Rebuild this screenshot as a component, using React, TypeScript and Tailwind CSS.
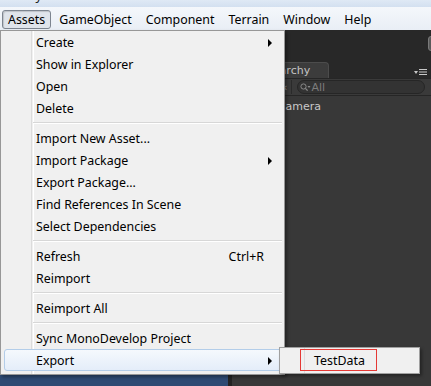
import React from 'react';

type Item = { label: string; arrow?: boolean; shortcut?: string; active?: boolean } | 'sep';

const MENU_BAR = ['GameObject', 'Component', 'Terrain', 'Window', 'Help'];

const ITEMS: Item[] = [
    { label: 'Create', arrow: true },
    { label: 'Show in Explorer' },
    { label: 'Open' },
    { label: 'Delete' },
    'sep',
    { label: 'Import New Asset...' },
    { label: 'Import Package', arrow: true },
    { label: 'Export Package...' },
    { label: 'Find References In Scene' },
    { label: 'Select Dependencies' },
    'sep',
    { label: 'Refresh', shortcut: 'Ctrl+R' },
    { label: 'Reimport' },
    'sep',
    { label: 'Reimport All' },
    'sep',
    { label: 'Sync MonoDevelop Project' },
    { label: 'Export', arrow: true, active: true },
];

const Arrow = () => (
    <svg width="4" height="8" viewBox="0 0 4 8" className="shrink-0 mr-[9px]">
        <path d="M0 0 L4 4 L0 8 Z" fill="#000" />
    </svg>
);

const AssetsMenu = () => (
    <div className="absolute left-0 top-[30px] w-[285px] h-[345px] bg-[#f0f0f0] border border-[#979797] pl-[3px] pr-[2px] shadow-[2px_2px_3px_rgba(0,0,0,0.35)]">
        {/* icon gutter */}
        <div className="absolute left-[30px] top-0 bottom-0 w-[2px] border-l border-[#dcdcdc] shadow-[1px_0_0_#ffffff]" />
        <div className="relative flex flex-col">
            {ITEMS.map((it, i) =>
                it === 'sep' ? (
                    <div key={i} className="h-[8px] flex items-center pl-[29px]">
                        <div className="h-[2px] w-full border-t border-[#d7d7d7] border-b-white border-b" />
                    </div>
                ) : (
                    <div
                        key={i}
                        className={
                            'h-[22px] flex items-center pl-[31px] pt-[2px] rounded-[3px] border ' +
                            (it.active
                                ? 'border-[#b3cde9] bg-gradient-to-b from-[#f5f9fd] to-[#e4edf9]'
                                : 'border-transparent')
                        }
                    >
                        <span className="flex-1 text-[12.4px] text-black">{it.label}</span>
                        {it.shortcut && <span className="text-[12.4px] text-black mr-[17px]">{it.shortcut}</span>}
                        {it.arrow && <Arrow />}
                    </div>
                )
            )}
        </div>
    </div>
);

const ExportSubmenu = () => (
    <div className="absolute left-[279px] top-[347px] w-[141px] h-[27px] bg-[#f0f0f0] border border-[#a0a0a0] shadow-[2px_2px_3px_rgba(0,0,0,0.35)]">
        <div className="absolute left-[24px] top-0 bottom-0 w-px bg-[#dcdcdc]" />
        <div className="h-[25px] flex items-center pl-[34px] pt-[2px] text-[12.4px] text-black">TestData</div>
        {/* annotation box */}
        <div className="absolute left-[20px] top-[1px] w-[77px] h-[22px] border border-[#e53935]" />
    </div>
);

export default function App() {
    return (
        <div className="relative w-[431px] h-[386px] overflow-hidden flex flex-col font-['Noto_Sans',sans-serif]">
            {/* window title strip */}
            <div className="h-[8px] shrink-0 overflow-hidden bg-gradient-to-b from-[#dfe9f5] to-[#d3e0f0] border-b border-[#f4f7fb]">
                <div className="ml-[10px] -mt-[13px] text-[13px] leading-[16px] text-[#1e1e1e]">Unity</div>
            </div>

            {/* menu bar */}
            <div className="h-[22px] shrink-0 flex items-center pl-[2px] pt-[1px] bg-gradient-to-b from-[#f4f7fb] to-[#e9eef5] text-[12.4px] text-black">
                <div className="h-[19px] flex items-center px-[5px] pt-[1px] rounded-[3px] border border-[#7d8590] bg-[#dfe4eb] shadow-[inset_1px_1px_1px_rgba(0,0,0,0.15)]">
                    Assets
                </div>
                <div className="flex ml-px pt-[1px]">
                    {MENU_BAR.map((m) => (
                        <span key={m} className="px-[7px]">{m}</span>
                    ))}
                </div>
            </div>

            {/* editor behind the menu */}
            <div className="flex-1 flex flex-col bg-[#282828] font-['DejaVu_Sans',sans-serif] text-[11px]">
                <div className="h-[30px] shrink-0 pl-[428px] pt-[6px]">
                    <div className="w-[20px] h-[15px] rounded-[3px] bg-[#5a5a5a] border border-[#7a7a7a]" />
                </div>
                <div className="flex-1 flex">
                    <div className="w-[228px] bg-[#2e4a73]" />
                    <div className="w-[4px] bg-[#232323]" />
                    <div className="flex-1 flex flex-col">
                        <div className="h-[18px] flex items-end">
                            <div className="ml-[12px] w-[85px] h-[16px] bg-[#3c3c3c] border-t border-r border-[#4c4c4c] rounded-tr-[4px] pl-[13px] text-[#c4c4c4] leading-[15px]">
                                Hierarchy
                            </div>
                            <svg width="14" height="8" viewBox="0 0 14 8" className="ml-auto mr-[3px] mb-[2px]">
                                <path d="M0 3 L4 3 L2 6 Z" fill="#c8c8c8" />
                                <rect x="5" y="1" width="8" height="1" fill="#c8c8c8" />
                                <rect x="5" y="3.5" width="8" height="1" fill="#c8c8c8" />
                                <rect x="5" y="6" width="8" height="1" fill="#c8c8c8" />
                            </svg>
                        </div>
                        <div className="h-[18px] flex items-center bg-[#3a3a3a] border-t border-b border-[#262626]">
                            <span className="ml-[51px] text-[#9a9a9a] leading-none">‹</span>
                            <div className="ml-[4px] w-px h-[14px] bg-[#2a2a2a]" />
                            <div className="ml-[5px] w-[128px] h-[14px] rounded-full border border-[#262626] bg-[#333333] flex items-center pl-[2px] gap-0">
                                <svg width="11" height="9" viewBox="0 0 11 9">
                                    <circle cx="3.5" cy="3.5" r="2.6" fill="none" stroke="#8a8a8a" strokeWidth="1" />
                                    <path d="M5.4 5.4 L7.6 7.6" stroke="#8a8a8a" strokeWidth="1.3" />
                                    <path d="M7.5 3 L10.5 3 L9 5 Z" fill="#8a8a8a" />
                                </svg>
                                <span className="text-[#7c7c7c] leading-none">All</span>
                            </div>
                        </div>
                        <div className="flex-1 bg-[#383838] pt-[3px]">
                            <div className="pl-[16px] h-[16px] leading-[16px] text-[#c8c8c8]">Main Camera</div>
                        </div>
                    </div>
                </div>
            </div>

            <AssetsMenu />
            <ExportSubmenu />
        </div>
    );
}
